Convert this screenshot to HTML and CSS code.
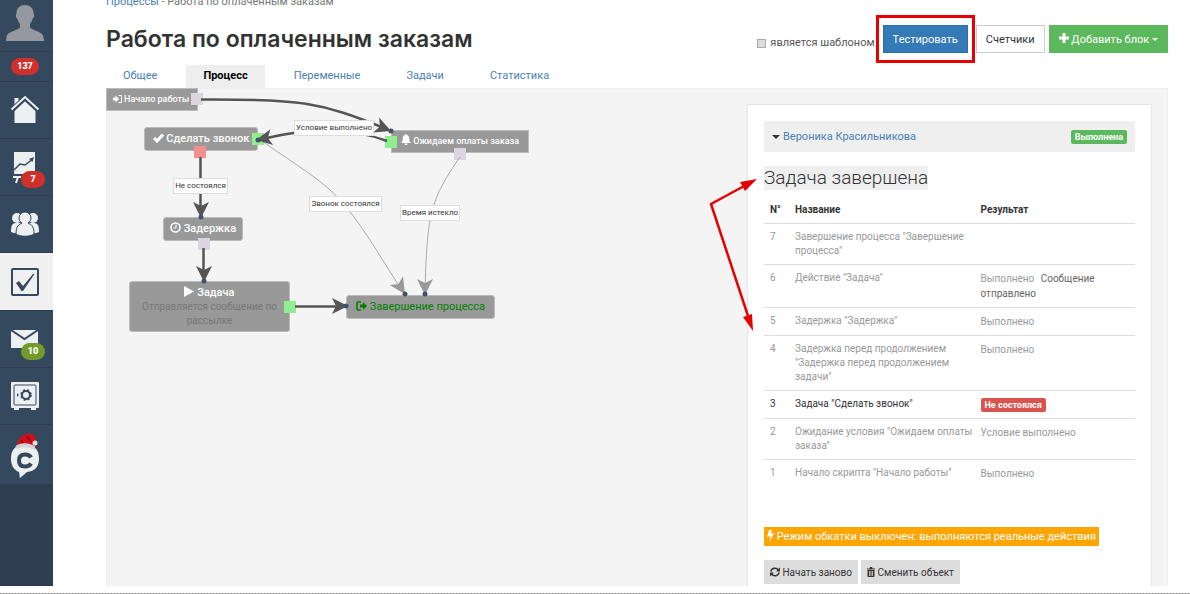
FILE: index.html
```html
<!DOCTYPE html>
<html lang="ru">
<head>
    <meta charset="UTF-8">
    <meta name="viewport" content="width=device-width, initial-scale=1.0">
    <title>Работа по оплаченным заказам</title>
    <link rel="stylesheet" href="styles.css">
</head>
<body>

<div class="app">
    <nav class="sidebar">
        <a class="side-item side-avatar" href="#" aria-label="Профиль">
            <svg width="38" height="38" viewBox="0 0 38 38"><path fill="#95999f" d="M19 1c5 0 8.500 3 8.500 8 0 1 .8 1 .6 3-.2 2-1.300 2-1.600 3-.5 2-1.500 4-2.500 5v3c0 3 13 4 13.500 10l.5 4H0l.5-4C1 27 14 26 14 23v-3c-1-1-2-3-2.500-5-.3-1-1.400-1-1.600-3-.2-2 .6-2 .6-3 0-5 3.500-8 8.500-8z"/></svg>
        </a>
        <a class="side-item side-count" href="#"><span class="badge">137</span></a>
        <a class="side-item" href="#" aria-label="Главная">
            <svg width="30" height="30" viewBox="0 0 30 30"><path fill="#ecf0f1" d="M4.500 3h4v3l-4 4zM15 5l10.500 10.500V28h-21V15.500z"/><path fill="none" stroke="#34495e" stroke-width="5" d="M1.500 15.500L15 3l13.500 12.500"/><path fill="none" stroke="#ecf0f1" stroke-width="2" d="M1.500 14.500L15 2l13.500 12.500"/></svg>
        </a>
        <a class="side-item" href="#" aria-label="Отчеты">
            <svg width="30" height="34" viewBox="0 0 30 34"><path fill="#ecf0f1" d="M4 2h21v22H4z"/><path fill="none" stroke="#34495e" stroke-width="1.500" d="M4 20l6-6 5 1 8-6"/><path fill="#34495e" d="M24 7l-1.500 5-3.500-3z"/><path fill="none" stroke="#ecf0f1" stroke-width="2" d="M3 27h8M8 27l-2 6"/></svg>
            <span class="badge badge-over">7</span>
        </a>
        <a class="side-item" href="#" aria-label="Пользователи">
            <svg width="30" height="30" viewBox="0 0 30 30"><g fill="#ecf0f1"><circle cx="7" cy="9" r="5"/><circle cx="23" cy="9" r="5"/><path d="M1 23c0-6 1-9 5-9h18c4 0 5 3 5 9-3 2-25 2-28 0z"/></g><g fill="#ecf0f1" stroke="#34495e" stroke-width="1"><path d="M6 25c0-7 2-11 9-11s9 4 9 11c-4 3-14 3-18 0z"/><circle cx="15" cy="9" r="6"/></g><path fill="#ecf0f1" d="M12 13h6v4h-6z"/></svg>
        </a>
        <a class="side-item active" href="#" aria-label="Задачи">
            <svg width="30" height="30" viewBox="0 0 30 30"><rect x="2" y="2" width="26" height="26" rx="1" fill="none" stroke="#34495e" stroke-width="2"/><path fill="#34495e" d="M6 16l3-2 4 5L23 7h1.500L13 24h-1.500z"/></svg>
        </a>
        <a class="side-item" href="#" aria-label="Сообщения">
            <svg width="30" height="30" viewBox="0 0 30 30"><path fill="#ecf0f1" d="M1 6h27v18H1z"/><path fill="none" stroke="#34495e" stroke-width="2" d="M1 6l13.500 9L28 6"/></svg>
            <span class="badge badge-over badge-green">10</span>
        </a>
        <a class="side-item" href="#" aria-label="Продажи">
            <svg width="30" height="30" viewBox="0 0 30 30"><path fill="#ecf0f1" d="M2 1h26a1 1 0 0 1 1 1v24a1 1 0 0 1-1 1h-2v2h-5v-2H9v2H4v-2H2a1 1 0 0 1-1-1V2a1 1 0 0 1 1-1z"/><rect x="4" y="4" width="22" height="20" rx="1" fill="none" stroke="#34495e"/><circle cx="16" cy="14" r="4" fill="none" stroke="#34495e" stroke-width="2"/><circle cx="16" cy="14" r="5" fill="none" stroke="#34495e" stroke-width="1.500" stroke-dasharray="2 2"/><path fill="#34495e" d="M7 12l2 2-2 2z"/></svg>
        </a>
        <a class="side-item side-chat" href="#" aria-label="Чат">
            <svg width="34" height="48" viewBox="0 0 34 48"><path fill="#ecf0f1" d="M17 14c10 0 14 5 14 13.500C31 36 27 40 19 41l-7 6c-1-1 0-4-1-6-5-2-8-6-8-13.500C3 19 7 14 17 14z"/><path fill="none" stroke="#34495e" stroke-width="4" d="M23 26.500c-1-2-3-3-6-3-4 0-6 2-6 6s2 6 6 6c3 0 5-1 6-3"/><path fill="#d0101c" d="M9 15c0-6 4-11 10-12 6-2 9 1 9 8l-2 1 1 5c-5-3-12-3-18-2z"/><path fill="#7d0a12" d="M18 5c4 1 5 4 6 8l-3-4zM14 8l2 6-3-2z"/><path fill="#d9d3d3" d="M9 14c6-3 12-2 18 1v4c-6-3-12-4-18-1-2-1-2-3 0-4z"/><circle cx="27" cy="12" r="2.500" fill="#e9dfdd"/></svg>
        </a>
    </nav>

    <main class="main">
        <div class="breadcrumbs"><a href="#">Процессы</a> - Работа по оплаченным заказам</div>

        <header class="page-header">
            <h1>Работа по оплаченным заказам</h1>
            <div class="actions">
                <label class="template-check"><input type="checkbox"> является шаблоном</label>
                <button class="btn btn-primary marked">Тестировать</button>
                <button class="btn btn-default">Счетчики</button>
                <button class="btn btn-success"><svg width="10" height="10" viewBox="0 0 10 10"><path fill="#fff" d="M3.500 0h3v3.500H10v3H6.500V10h-3V6.500H0v-3h3.500z"/></svg> Добавить блок <span class="caret"></span></button>
            </div>
        </header>

        <div class="tabs">
            <a href="#">Общее</a>
            <a href="#" class="active">Процесс</a>
            <a href="#">Переменные</a>
            <a href="#">Задачи</a>
            <a href="#">Статистика</a>
        </div>

        <div class="canvas">
            <div class="scheme">
                <div class="node node-start"><svg width="9" height="8" viewBox="0 0 9 8"><path fill="#fff" d="M0 2.500h2.500V.500L6 4 2.500 7.500v-2H0z"/><path fill="none" stroke="#fff" d="M5.500 .500h3v7h-3"/></svg> Начало работы</div>
                <div class="node node-call"><svg width="11" height="10" viewBox="0 0 11 10"><path fill="none" stroke="#fff" stroke-width="3" d="M1 5l3 3 6-6.500"/></svg> Сделать звонок</div>
                <div class="node node-wait"><svg width="10" height="11" viewBox="0 0 10 11"><path fill="#fff" d="M5 0c.6 0 .8.500.8 1C8 1.500 8.300 3 8.300 5c0 2 .7 3 1.700 4H0c1-1 1.700-2 1.700-4 0-2 .3-3.500 2.500-4 0-.5.200-1 .8-1zM3.500 9.500h3c0 2-3 2-3 0z"/></svg> Ожидаем оплаты заказа</div>
                <div class="node node-delay"><svg width="11" height="11" viewBox="0 0 11 11"><circle cx="5.500" cy="5.500" r="4.500" fill="none" stroke="#fff" stroke-width="1.600"/><path fill="none" stroke="#fff" d="M6 2.500V6H3.500"/></svg> Задержка</div>
                <div class="node node-task">
                    <div><svg width="10" height="11" viewBox="0 0 10 11"><path fill="#fff" d="M0 0l10 5.500L0 11z"/></svg> Задача</div>
                    <div class="node-note">Отправляется сообщение по рассылке</div>
                </div>
                <div class="node node-end"><svg width="11" height="10" viewBox="0 0 11 10"><path fill="none" stroke="#008000" stroke-width="1.500" d="M5 1H2a1 1 0 0 0-1 1v6a1 1 0 0 0 1 1h3"/><path fill="#008000" d="M4 3.500h3V1l4 4-4 4V6.500H4z"/></svg> Завершение процесса</div>

                <span class="port port-start"></span>
                <span class="port port-call green"></span>
                <span class="port port-call-fail red"></span>
                <span class="port port-wait green"></span>
                <span class="port port-wait-out"></span>
                <span class="port port-delay"></span>
                <span class="port port-task green"></span>

                <!-- connections between blocks -->
                <svg class="links" width="440" height="260" viewBox="106 88 440 260">
                    <defs>
                        <path id="head" d="M0 0L-16-8-12 0-16 8z"/>
                    </defs>
                    <g fill="none" stroke="#aaa">
                        <path d="M262 141C295 165 325 180 347 208C368 234 385 265 402 290"/>
                        <path d="M460 157C430 200 427 215 425 292"/>
                    </g>
                    <g fill="none" stroke="#555" stroke-width="2.500">
                        <path d="M201 99.500C300 99 320 102 384 128"/>
                        <path d="M387 141C350 127 310 128 262 139"/>
                        <path d="M200.500 157v54M203.500 248v28M295 306.500h44"/>
                    </g>
                    <g fill="#555">
                        <use href="#head" transform="translate(391 131) rotate(22)"/>
                        <use href="#head" transform="translate(256 140) rotate(170)"/>
                        <use href="#head" transform="translate(201 218) rotate(90)"/>
                        <use href="#head" transform="translate(204 282) rotate(90)"/>
                        <use href="#head" transform="translate(348 306) rotate(0)"/>
                    </g>
                    <g fill="#999">
                        <use href="#head" transform="translate(405 294) rotate(57)"/>
                        <use href="#head" transform="translate(425 295) rotate(90)"/>
                    </g>
                    <g fill="#3f5468">
                        <circle cx="391" cy="131" r="2.500"/>
                        <circle cx="258" cy="140" r="2.500"/>
                        <circle cx="201" cy="217" r="2.500"/>
                        <circle cx="204" cy="281" r="2.500"/>
                        <circle cx="346" cy="306" r="2.500"/>
                        <circle cx="405" cy="294" r="2.500"/>
                        <circle cx="425" cy="294" r="2.500"/>
                    </g>
                </svg>

                <span class="link-label label-done">Условие выполнено</span>
                <span class="link-label label-fail">Не состоялся</span>
                <span class="link-label label-call">Звонок состоялся</span>
                <span class="link-label label-time">Время истекло</span>
            </div>

            <section class="panel">
                <div class="panel-head">
                    <span class="caret"></span>
                    <a href="#">Вероника Красильникова</a>
                    <span class="label label-success">Выполнена</span>
                </div>
                <h2>Задача завершена</h2>
                <table class="log">
                    <thead>
                        <tr><th class="col-num">N°</th><th class="col-name">Название</th><th>Результат</th></tr>
                    </thead>
                    <tbody>
                        <tr><td>7</td><td>Завершение процесса "Завершение процесса"</td><td></td></tr>
                        <tr><td>6</td><td>Действие "Задача"</td><td>Выполнено <span class="message">Сообщение отправлено</span></td></tr>
                        <tr><td>5</td><td>Задержка "Задержка"</td><td>Выполнено</td></tr>
                        <tr><td>4</td><td>Задержка перед продолжением "Задержка перед продолжением задачи"</td><td>Выполнено</td></tr>
                        <tr class="current"><td>3</td><td>Задача "Сделать звонок"</td><td><span class="label label-danger">Не состоялся</span></td></tr>
                        <tr><td>2</td><td>Ожидание условия "Ожидаем оплаты заказа"</td><td>Условие выполнено</td></tr>
                        <tr><td>1</td><td>Начало скрипта "Начало работы"</td><td>Выполнено</td></tr>
                    </tbody>
                </table>
                <div class="mode"><svg width="7" height="12" viewBox="0 0 7 12"><path fill="#fff" d="M2 0h3L4 3.500l3-.5L2.500 12l1-6L0 7z"/></svg> Режим обкатки выключен: выполняются реальные действия</div>
                <div class="panel-buttons">
                    <button class="btn-gray"><svg width="10" height="10" viewBox="0 0 10 10"><path fill="none" stroke="#333" stroke-width="1.600" d="M1 4.500C1.500 1 6 0 8.500 3M9 5.500C8.500 9 4 10 1.500 7"/><path fill="#333" d="M10 .500v4H6zM0 9.500v-4h4z"/></svg> Начать заново</button>
                    <button class="btn-gray"><svg width="8" height="10" viewBox="0 0 8 10"><path fill="#333" d="M0 1.500h2.500L3 0h2l.5 1.500H8v1H0zM.500 3h7v6a1 1 0 0 1-1 1h-5a1 1 0 0 1-1-1z"/><path stroke="#ddd" stroke-width=".8" d="M2.500 4v5M4 4v5M5.500 4v5"/></svg> Сменить объект</button>
                </div>
                <svg class="pointer" width="48" height="156" viewBox="709 177 48 156">
                    <path fill="none" stroke="#e60000" stroke-width="2.500" d="M746 185l-35 19 38 115"/>
                    <path fill="#e60000" d="M757 179l-12 12-5-9zM753 331l-10-14 9-3z"/>
                </svg>
            </section>
        </div>
    </main>
</div>

</body>
</html>
```
FILE: styles.css
```css
* {
    box-sizing: border-box;
}
body {
    margin: 0;
    height: 100vh;
    padding-bottom: 8px;
    font-family: Roboto, "Noto Sans", sans-serif;
    font-size: 11px;
    color: #333;
    background: repeating-linear-gradient(90deg, #888 0 1px, #bbb 1px 3px) bottom / 100% 1px no-repeat #fff;
}
a {
    color: #4a7fb5;
    text-decoration: none;
}
button {
    font-family: inherit;
    cursor: pointer;
}
.app {
    display: flex;
    height: 100%;
    overflow: hidden;
}

/* sidebar */
.sidebar {
    flex: 0 0 53px;
    background: #2e3e50;
}
.side-item {
    position: relative;
    display: flex;
    align-items: center;
    justify-content: center;
    height: 57px;
    padding-right: 3px;
    background: #34495e;
    border-bottom: 1px solid #2c3e50;
}
.side-avatar {
    height: 52px;
    padding-bottom: 6px;
}
.side-count {
    height: 30px;
}
.side-chat {
    height: 60px;
}
.side-item.active {
    height: 58px;
    background: #f0f0f0;
}
.badge {
    min-width: 24px;
    padding: 0 6px;
    border-radius: 9px;
    background: #d0302c;
    color: #fff;
    font-size: 9px;
    font-weight: 900;
    line-height: 17px;
    text-align: center;
}
.badge-over {
    position: absolute;
    top: 32px;
    right: 8px;
}
.badge-green {
    background: #739b2c;
}

/* page head */
.main {
    flex: 1;
    display: flex;
    flex-direction: column;
    padding: 0 22px 0 53px;
    min-width: 0;
}
.breadcrumbs {
    margin-top: -7px;
    line-height: 18px;
    color: #777;
}
.page-header {
    display: flex;
    justify-content: space-between;
    height: 54px;
    padding-top: 14px;
}
h1 {
    margin: 0;
    font-family: Inter, sans-serif;
    font-size: 23px;
    font-weight: 600;
    line-height: 28px;
    color: #333;
}
.actions {
    display: flex;
    align-items: flex-start;
    gap: 4px;
}
.template-check {
    display: flex;
    align-items: center;
    gap: 4px;
    margin: 10px 4px 0 0;
    line-height: 16px;
    color: #555;
}
.template-check input {
    appearance: none;
    width: 9px;
    height: 9px;
    margin: 0;
    background: #ddd;
    border: 1px solid #aaa;
}
.btn {
    height: 28px;
    padding: 0 9px;
    border: 1px solid #ccc;
    color: #333;
    font-size: 11px;
}
.btn-primary {
    background: #337ab7;
    border-color: #2e6da4;
    color: #fff;
}
.btn-default {
    background: #fff;
    margin-left: 4px;
}
.btn-success {
    background: #5cb85c;
    border-color: #5cb85c;
    color: #fff;
}
.caret {
    display: inline-block;
    border: 3px solid transparent;
    border-top-color: currentColor;
    border-bottom: 0;
    vertical-align: middle;
}
.marked {
    position: relative;
}
.marked::after {
    content: "";
    position: absolute;
    inset: -11px -8px;
    border: 3px solid #e60000;
}
.tabs {
    display: flex;
    gap: 12px;
    height: 23px;
}
.tabs a {
    padding: 0 17px;
    line-height: 22px;
}
.tabs .active {
    background: #eee;
    color: #000;
    font-weight: bold;
}

/* process scheme */
.canvas {
    flex: 1;
    display: flex;
    justify-content: space-between;
    min-height: 0;
    padding: 15px 15px 0 0;
    background: #f4f4f4;
    border: 1px solid #eee;
    border-bottom: 0;
}
.scheme {
    position: relative;
    flex: 1;
    margin-top: -16px;
    margin-left: -1px;
}
.node {
    position: absolute;
    background: #999;
    border: 1px solid #bbb;
    border-radius: 3px;
    color: #fff;
    font-size: 11px;
    font-weight: 500;
    line-height: 22px;
    text-align: center;
    white-space: nowrap;
}
.node svg {
    vertical-align: -1px;
}
.node-start, .node-wait {
    border-radius: 0;
    font-size: 9px;
    line-height: 21px;
}
.node-start {
    left: 0;
    top: 0;
    width: 92px;
    padding-right: 2px;
}
.node-call {
    left: 38px;
    top: 39px;
    width: 114px;
}
.node-wait {
    left: 285px;
    top: 42px;
    width: 138px;
}
.node-delay {
    left: 57px;
    top: 129px;
    width: 80px;
}
.node-task {
    left: 23px;
    top: 193px;
    width: 161px;
    height: 51px;
    padding: 4px 8px;
    line-height: 14px;
}
.node-note {
    color: #777;
    font-size: 10px;
    font-weight: 400;
    white-space: normal;
}
.node-end {
    left: 240px;
    top: 207px;
    width: 149px;
    color: #008000;
    font-weight: 400;
}
.port {
    position: absolute;
    width: 12px;
    height: 12px;
    background: #dbd5df;
}
.port.green {
    background: #90ee90;
}
.port.red {
    background: #f09090;
}
.port-start {
    left: 85px;
    top: 5px;
}
.port-call {
    left: 146px;
    top: 45px;
}
.port-call-fail {
    left: 88px;
    top: 58px;
}
.port-wait {
    left: 279px;
    top: 48px;
}
.port-wait-out {
    left: 348px;
    top: 60px;
}
.port-delay {
    left: 92px;
    top: 150px;
}
.port-task {
    left: 178px;
    top: 213px;
}
.links {
    position: absolute;
    left: 0;
    top: 0;
}
.link-label {
    position: absolute;
    padding: 0 1px;
    background: #fff;
    border: 1px solid #ddd;
    font-size: 8px;
    line-height: 14px;
    text-align: center;
    white-space: nowrap;
}
.label-done {
    left: 188px;
    top: 32px;
    width: 80px;
}
.label-fail {
    left: 67px;
    top: 90px;
    width: 55px;
}
.label-call {
    left: 203px;
    top: 108px;
    width: 73px;
}
.label-time {
    left: 294px;
    top: 117px;
    width: 60px;
}

/* test panel */
.panel {
    position: relative;
    flex: 0 0 405px;
    height: 600px;
    padding: 16px;
    background: #fff;
    border: 1px solid #e4e4e4;
}
.panel-head {
    display: flex;
    align-items: center;
    gap: 3px;
    height: 31px;
    padding: 0 8px;
    background: #efefef;
}
.panel-head .caret {
    border-width: 4px 4px 0;
}
.label {
    padding: 0 4px;
    border-radius: 2px;
    color: #fff;
    font-size: 9px;
    font-weight: bold;
    line-height: 14px;
}
.label-success {
    margin-left: auto;
    background: #5cb85c;
}
.label-danger {
    display: inline-block;
    background: #d9534f;
}
h2 {
    width: fit-content;
    margin: 14px 0 7px;
    background: #efefef;
    font-size: 19px;
    font-weight: 300;
    line-height: 24px;
}
.log {
    width: 100%;
    table-layout: fixed;
    border-collapse: collapse;
    font-size: 10px;
    line-height: 14px;
    color: #999;
}
.log th, .log td {
    padding: 6px 0 6px 6px;
    text-align: left;
    vertical-align: top;
}
.log th {
    color: #333;
}
.log td {
    border-top: 1px solid #ddd;
}
.log td:last-child {
    line-height: 15px;
}
.log .col-num {
    width: 25px;
}
.log .col-name {
    width: 50%;
}
.log .current, .message {
    color: #333;
}
.message {
    margin-left: 4px;
    color: #666;
}
.mode {
    width: fit-content;
    margin-top: 40px;
    padding: 0 3px;
    background: #ffa500;
    color: #fff;
    line-height: 19px;
}
.mode svg {
    vertical-align: -2px;
}
.panel-buttons {
    display: flex;
    gap: 3px;
    margin-top: 14px;
}
.btn-gray {
    height: 24px;
    padding: 0 6px;
    background: #ddd;
    border: 0;
    color: #333;
    font-size: 10px;
}
.btn-gray svg {
    vertical-align: -1px;
}
.pointer {
    position: absolute;
    left: -39px;
    top: 72px;
}
```
